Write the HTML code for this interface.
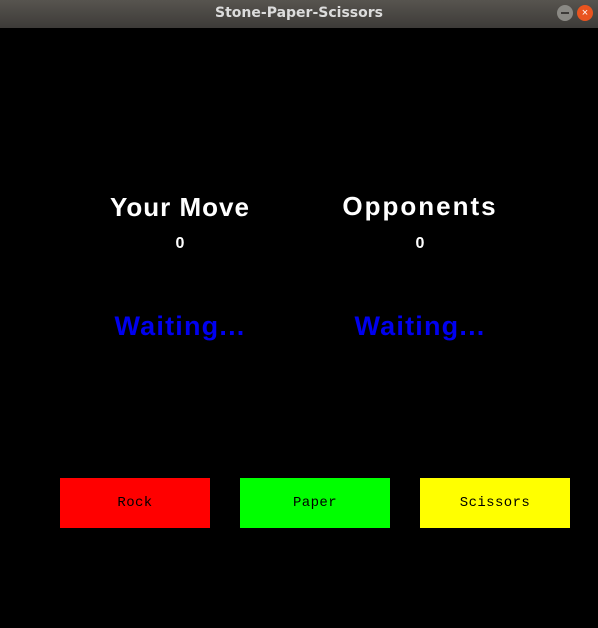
<!DOCTYPE html>
<html><head><style>
body{margin:0;width:598px;height:628px;background:#000;overflow:hidden;position:relative;font-family:"Liberation Sans",sans-serif}
.tb{position:absolute;left:0;top:0;width:598px;height:28px;background:linear-gradient(#57544f,#3d3b38);color:#dcdcdc;font-weight:bold;font-size:14px;text-align:center;line-height:27px;font-family:"DejaVu Sans","Liberation Sans",sans-serif}
.c{position:absolute;width:240px;text-align:center;font-weight:bold;line-height:1}
.b{position:absolute;top:478px;width:150px;height:50px;font-family:"Liberation Mono",monospace;font-size:14px;letter-spacing:0.4px;line-height:50px;text-align:center;color:#000}
.circ{position:absolute;top:5px;width:16px;height:16px;border-radius:50%}
</style></head><body>
<div class="tb">Stone-Paper-Scissors</div>
<div class="circ" style="left:557px;background:#8a8984"><div style="position:absolute;left:4px;top:7px;width:8px;height:2px;background:#3d3b38"></div></div>
<div class="circ" style="left:577px;background:#e9541f;color:#fff;font-size:11px;text-align:center;line-height:16px">×</div>
<div class="c" style="left:60px;top:194px;font-size:26px;color:#fff;letter-spacing:1px">Your Move</div>
<div class="c" style="left:300px;top:193px;font-size:26px;color:#fff;letter-spacing:2px">Opponents</div>
<div class="c" style="left:60px;top:236px;font-size:16px;color:#fff">0</div>
<div class="c" style="left:300px;top:236px;font-size:16px;color:#fff">0</div>
<div class="c" style="left:60px;top:313px;font-size:27px;color:#0000f0;letter-spacing:1.2px">Waiting...</div>
<div class="c" style="left:300px;top:313px;font-size:27px;color:#0000f0;letter-spacing:1.2px">Waiting...</div>
<div class="b" style="left:60px;background:#f00">Rock</div>
<div class="b" style="left:240px;background:#0f0">Paper</div>
<div class="b" style="left:420px;background:#ff0">Scissors</div>
</body></html>
